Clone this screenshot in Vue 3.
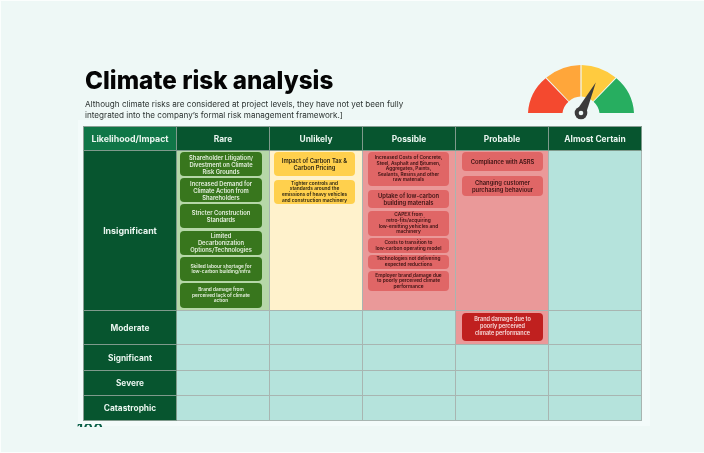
<script setup>
const columns = ['Rare', 'Unlikely', 'Possible', 'Probable', 'Almost Certain']

const rare = [
  { t: 'Shareholder Litigation/\nDivestment on Climate\nRisk Grounds', h: 24, g: 0 },
  { t: 'Increased Demand for\nClimate Action from\nShareholders', h: 24, g: 2 },
  { t: 'Stricter Construction\nStandards', h: 24, g: 2 },
  { t: 'Limited\nDecarbonization\nOptions/Technologies', h: 24, g: 2.7 },
  { t: 'Skilled labour shortage for\nlow-carbon building/infra', h: 24.4, g: 2.3, s: true },
  { t: 'Brand damage from\nperceived lack of climate\naction', h: 24.6, g: 2, s: true }
]
const unlikely = [
  { t: 'Impact of Carbon Tax &\nCarbon Pricing', h: 24, g: 0 },
  { t: 'Tighter controls and\nstandards around the\nemissions of heavy vehicles\nand construction machinery', h: 24, g: 4, s: true }
]
const possible = [
  { t: 'Increased Costs of Concrete,\nSteel, Asphalt and Bitumen,\nAggregates, Paints,\nSealants, Resins and other\nraw materials', h: 34, g: 0, s: true },
  { t: 'Uptake of low-carbon\nbuilding materials', h: 18, g: 4 },
  { t: 'CAPEX from\nretro-fits/acquiring\nlow-emitting vehicles and\nmachinery', h: 25, g: 3, s: true },
  { t: 'Costs to transition to\nlow-carbon operating model', h: 15, g: 2, s: true },
  { t: 'Technologies not delivering\nexpected reductions', h: 14, g: 2, s: true },
  { t: 'Employer brand damage due\nto poorly perceived climate\nperformance', h: 20, g: 2, s: true }
]
const probable = [
  { t: 'Compliance with ASRS', h: 19, g: 0 },
  { t: 'Changing customer\npurchasing behaviour', h: 20, g: 5 }
]
const risks = [
  { key: 'rare', cell: 'bg-green', card: 'card-green', items: rare },
  { key: 'unlikely', cell: 'bg-yellow', card: 'card-yellow', items: unlikely },
  { key: 'possible', cell: 'bg-red', card: 'card-red', items: possible },
  { key: 'probable', cell: 'bg-red', card: 'card-red', items: probable },
  { key: 'certain', cell: 'bg-teal', card: '', items: [] }
]
const lowerRows = ['Significant', 'Severe', 'Catastrophic']
</script>

<template>
  <div class="page">
    <header class="head">
      <div class="intro">
        <h1>Climate risk analysis</h1>
        <p>Although climate risks are considered at project levels, they have not yet been fully<br>integrated into the company’s formal risk management framework.]</p>
      </div>
      <svg class="gauge" viewBox="528 64 106 56" width="106" height="56" aria-hidden="true">
        <path d="M528 113 A53 50 0 0 1 545.6 78.3 L568.4 101.8 A18.5 18.5 0 0 0 562.5 113 Z" fill="#f4492f"/>
        <path d="M546.4 77.6 A53 50 0 0 1 580.4 65 L580.4 96.6 A18.5 18.5 0 0 0 569 101.2 Z" fill="#ffa63a"/>
        <path d="M581.6 65 A53 50 0 0 1 615.6 77.6 L593 101.2 A18.5 18.5 0 0 0 581.6 96.6 Z" fill="#ffcb3f"/>
        <path d="M616.4 78.3 A53 50 0 0 1 634 113 L599.5 113 A18.5 18.5 0 0 0 593.6 101.8 Z" fill="#27ae60"/>
        <path d="M595.8 82.5 L585.5 115 L576.5 110.5 Z" fill="#3b3b3b"/>
        <circle cx="581" cy="113" r="6.3" fill="#3b3b3b"/>
        <circle cx="581" cy="113" r="2.3" fill="#eef8f6"/>
      </svg>
    </header>

    <section class="panel">
      <span class="page-no" aria-hidden="true"><b>100</b></span>
      <div class="matrix">
        <div class="th first">Likelihood/Impact</div>
        <div v-for="c in columns" :key="c" class="th">{{ c }}</div>

        <div class="rh wide">Insignificant</div>
        <div v-for="r in risks" :key="r.key" class="cell stack" :class="[r.cell, r.key]">
          <div
            v-for="it in r.items"
            :key="it.t"
            class="card"
            :class="[r.card, { small: it.s }]"
            :style="{ height: it.h + 'px', marginTop: it.g + 'px' }"
          >{{ it.t }}</div>
        </div>

        <div class="rh">Moderate</div>
        <div class="cell bg-teal"></div>
        <div class="cell bg-teal"></div>
        <div class="cell bg-teal"></div>
        <div class="cell bg-red mod"><div class="card card-dark">{{ 'Brand damage due to\npoorly perceived\nclimate performance' }}</div></div>
        <div class="cell bg-teal"></div>

        <template v-for="row in lowerRows" :key="row">
          <div class="rh">{{ row }}</div>
          <div v-for="n in 5" :key="n" class="cell bg-teal"></div>
        </template>
      </div>
    </section>
  </div>
</template>

<style scoped>
.page {
  width: 704px;
  height: 453px;
  overflow: hidden;
  box-sizing: border-box;
  border: 1px solid #fbfefd;
  border-right: 0;
  background: #eef8f6;
  font-family: Inter, "Open Sans", sans-serif;
  color: #0c0c0c;
}
.head {
  display: flex;
  justify-content: space-between;
  align-items: flex-end;
  box-sizing: border-box;
  width: 572px;
  height: 119px;
  margin-left: 77px;
  padding: 0 16px 0 7px;
  filter: blur(0.3px);
}
.intro { align-self: flex-end; }
h1 {
  margin: 0 0 1px;
  font-size: 24.2px;
  line-height: 32px;
  font-weight: 800;
  color: #050505;
}
p {
  margin: 2px 0 0;
  font-size: 8.15px;
  line-height: 10.5px;
  color: #2c3331;
  white-space: nowrap;
}
.gauge { display: block; flex: none; }
.panel {
  position: relative;
  box-sizing: border-box;
  width: 572px;
  height: 306px;
  margin-left: 77px;
  padding: 6px 8px 0 5px;
  background: #f3fbfa;
}
.page-no {
  position: absolute;
  left: -1px;
  top: 304px;
  height: 2.5px;
  width: 40px;
  overflow: hidden;
  font-size: 14px;
  line-height: 14px;
  color: #0a5f47;
  filter: blur(0.3px);
}
.page-no b {
  display: block;
  margin-top: -2px;
  letter-spacing: 0.5px;
}
.matrix {
  display: grid;
  grid-template-columns: 94px repeat(5, 93px);
  grid-template-rows: 25px 160px 34px 26px 25px 25px;
  filter: blur(0.3px);
}
.th, .rh {
  display: flex;
  align-items: center;
  justify-content: center;
  box-sizing: border-box;
  color: #e9f5ef;
  font-weight: 700;
  background: #07552f;
  border-right: 1px solid #7f9a8c;
  border-bottom: 1px solid #7f9a8c;
}
.th { font-size: 8.4px; border-top: 1px solid #8b9f95; }
.th.first { background: #0f7647; font-size: 8.8px; border-left: 1px solid #8b9f95; }
.rh { font-size: 8.3px; border-left: 1px solid #8b9f95; }
.rh.wide { font-size: 8.8px; }
.cell {
  box-sizing: border-box;
  border-right: 1px solid #a8b5b1;
  border-bottom: 1px solid #a8b5b1;
}
.stack {
  display: flex;
  flex-direction: column;
  align-items: stretch;
  padding-top: 1px;
}
.rare { padding-left: 3px; padding-right: 7px; }
.unlikely { padding-left: 4px; padding-right: 7px; }
.possible { padding-left: 5px; padding-right: 6px; }
.probable { padding-left: 6px; padding-right: 5px; }
.bg-green { background: #b6d7a8; }
.bg-yellow { background: #fff2cc; }
.bg-red { background: #ea9999; }
.bg-teal { background: #b5e3dc; }
.card {
  display: flex;
  align-items: center;
  justify-content: center;
  flex: none;
  box-sizing: border-box;
  border-radius: 4px;
  text-align: center;
  white-space: pre;
  font-size: 5.8px;
  line-height: 7px;
  font-weight: 600;
}
.card.small { font-size: 4.8px; line-height: 5.6px; }
.card-green { background: #38761d; color: #e6f0df; }
.card-yellow { background: #ffd04d; color: #2b2412; }
.card-red { background: #e06666; color: #3a1212; }
.mod {
  display: flex;
  align-items: center;
  padding: 0 5px 2px 6px;
}
.card-dark {
  flex: 1;
  height: 28px;
  background: #c0201f;
  color: #f8dcdc;
  font-size: 5.5px;
}
</style>
